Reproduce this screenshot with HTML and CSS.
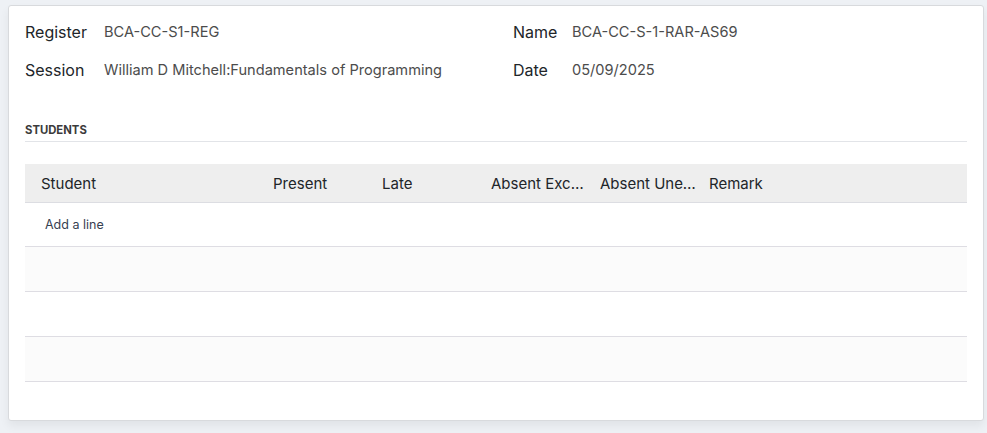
FILE: index.html
```html
<!DOCTYPE html>
<html>
<head>
<meta charset="utf-8">
<link rel="stylesheet" href="styles.css">
</head>
<body>
<div class="sheet">
  <div class="fields">
    <div class="group">
      <div class="field"><span class="label">Register</span><span class="value">BCA-CC-S1-REG</span></div>
      <div class="field"><span class="label">Session</span><span class="value">William D Mitchell:Fundamentals of Programming</span></div>
    </div>
    <div class="group">
      <div class="field"><span class="label">Name</span><span class="value">BCA-CC-S-1-RAR-AS69</span></div>
      <div class="field"><span class="label">Date</span><span class="value">05/09/2025</span></div>
    </div>
  </div>
  <div class="section-title">STUDENTS</div>
  <div class="table">
    <div class="thead">
      <div class="th c-student">Student</div>
      <div class="th c-num">Present</div>
      <div class="th c-num">Late</div>
      <div class="th c-num"><span class="ell">Absent Excused</span></div>
      <div class="th c-num"><span class="ell">Absent Unexcused</span></div>
      <div class="th c-remark">Remark</div>
    </div>
    <div class="row add"><span class="add-link">Add a line</span></div>
    <div class="row striped"></div>
    <div class="row"></div>
    <div class="row striped"></div>
  </div>
</div>
</body>
</html>
```
FILE: styles.css
```css
html, body {
  margin: 0;
  padding: 0;
}
body {
  background: #eef1f5;
  font-family: Inter, Roboto, "Liberation Sans", sans-serif;
  color: #212529;
  width: 987px;
  height: 433px;
  overflow: hidden;
}
.sheet {
  margin: 5px 3px 0 8px;
  height: 416px;
  box-sizing: border-box;
  background: #fff;
  border: 1px solid #d8dadd;
  border-radius: 3px;
  box-shadow: 0 5px 10px rgba(0,0,0,0.06);
  padding: 7px 16px 0 16px;
}
.fields {
  display: grid;
  grid-template-columns: 488px 1fr;
}
.group {
  display: flex;
  flex-direction: column;
}
.field {
  display: flex;
  align-items: center;
  height: 38px;
}
.label {
  font-size: 16px;
  color: #212529;
}
.group:first-child .label { width: 79px; }
.group:last-child .label { width: 59px; }
.value {
  font-size: 14.6px;
  color: #4c4c4c;
}
.section-title {
  margin-top: 34px;
  font-size: 11.3px;
  font-weight: 700;
  color: #3b3b3b;
  padding-bottom: 4px;
  border-bottom: 1px solid #e2e4e8;
}
.table {
  margin-top: 22px;
}
.thead {
  display: flex;
  height: 38px;
  background: #eeeeee;
  border-bottom: 1px solid #dcdde2;
  align-items: center;
}
.th {
  font-size: 15px;
  color: #212529;
  padding-left: 16px;
  box-sizing: border-box;
  white-space: nowrap;
}
.c-student { width: 232px; }
.c-num { width: 109px; }
.c-num .ell { width: 97px; }
.c-remark { flex: 1; }
.ell {
  display: block;
  overflow: hidden;
  text-overflow: ellipsis;
}
.row {
  height: 44px;
  border-bottom: 1px solid #dedde3;
  display: flex;
  align-items: center;
}
.row.add { height: 43px; }
.row.striped { background: #fbfbfb; }
.add-link {
  font-size: 12.5px;
  color: #374151;
  padding-left: 20px;
}
```
